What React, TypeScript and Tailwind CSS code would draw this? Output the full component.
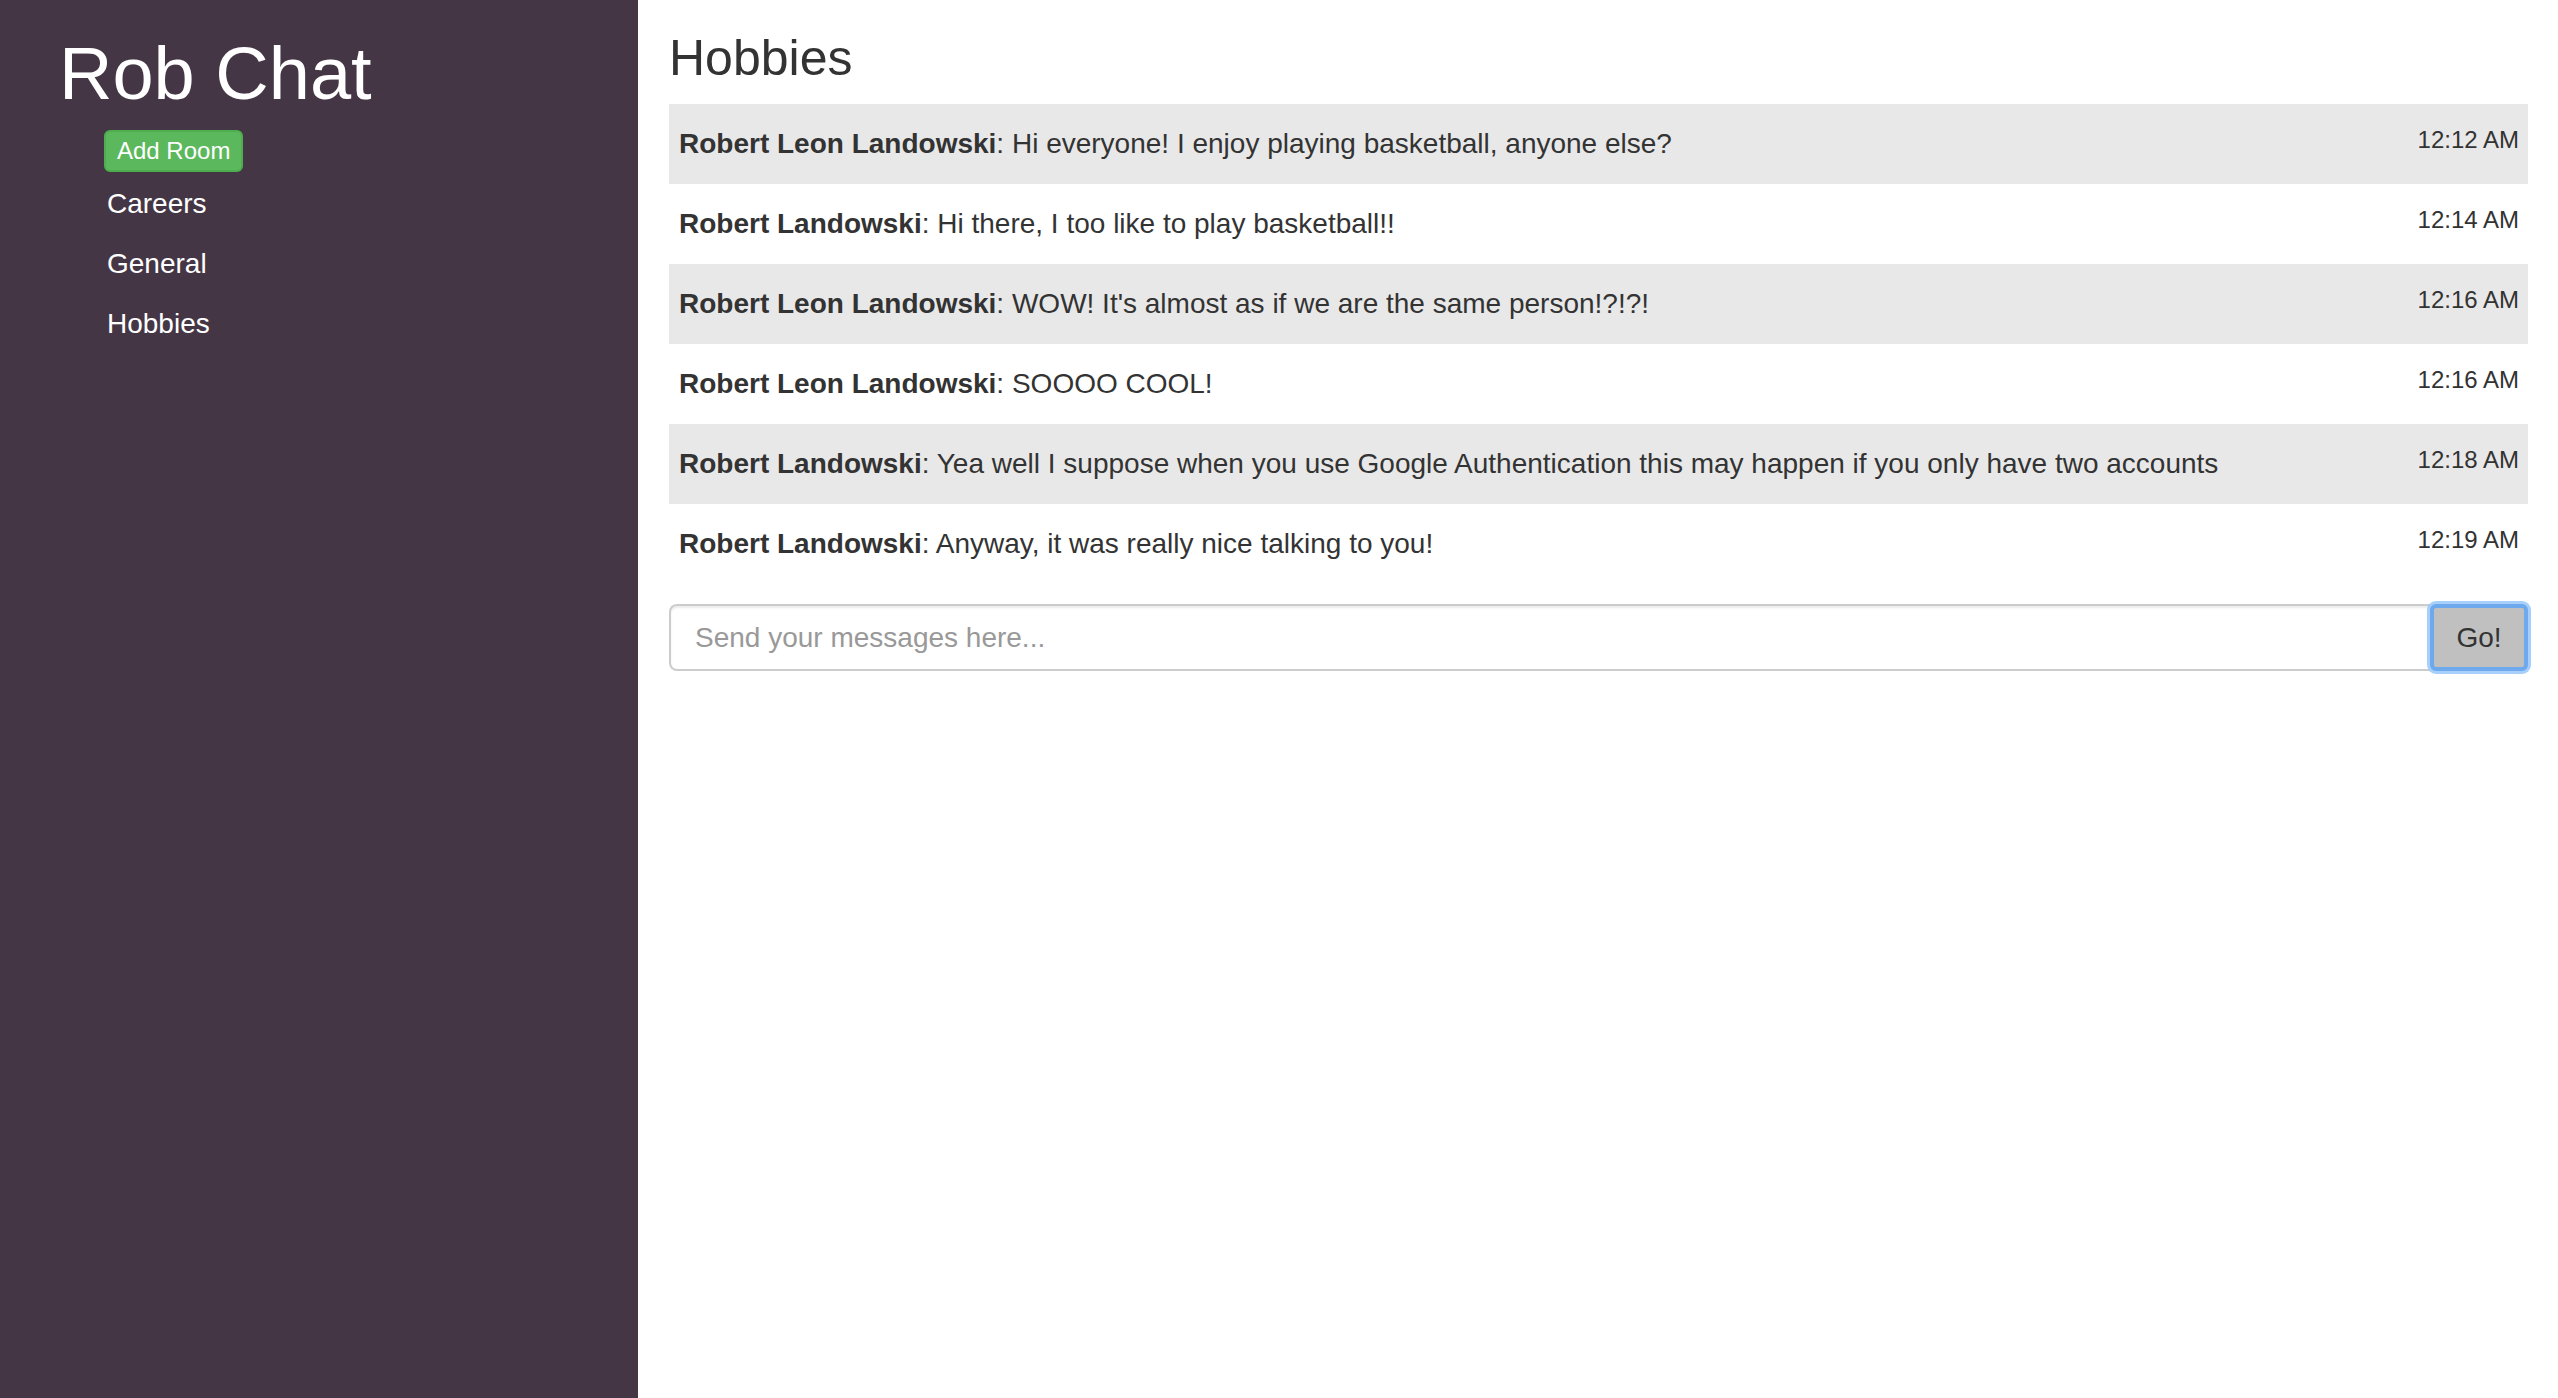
import type React from "react"

interface Message {
  user: string
  text: string
  time: string
}

const rooms = ["Careers", "General", "Hobbies"]

const messages: Message[] = [
  { user: "Robert Leon Landowski", text: "Hi everyone! I enjoy playing basketball, anyone else?", time: "12:12 AM" },
  { user: "Robert Landowski", text: "Hi there, I too like to play basketball!!", time: "12:14 AM" },
  { user: "Robert Leon Landowski", text: "WOW! It's almost as if we are the same person!?!?!", time: "12:16 AM" },
  { user: "Robert Leon Landowski", text: "SOOOO COOL!", time: "12:16 AM" },
  {
    user: "Robert Landowski",
    text: "Yea well I suppose when you use Google Authentication this may happen if you only have two accounts",
    time: "12:18 AM",
  },
  { user: "Robert Landowski", text: "Anyway, it was really nice talking to you!", time: "12:19 AM" },
]

const App: React.FC = () => {
  return (
    <div className="flex min-h-screen font-['Liberation_Sans',Arial,sans-serif] text-[#333]">
      {/* sidebar */}
      <aside className="w-[638px] shrink-0 bg-[#453646] pl-[59px] pt-[34px]">
        <h1 className="text-[74px] leading-[80px] text-white">Rob Chat</h1>
        <div className="mt-[16px] pl-[45px]">
          <button className="h-[42px] rounded-[6px] border-2 border-[#4cae4c] bg-[#5cb85c] px-[11px] text-[24px] leading-[38px] text-white">
            Add Room
          </button>
          <ul className="mt-[2px]">
            {rooms.map((room) => (
              <li key={room} className="h-[60px] pl-[3px] text-[28px] leading-[60px] text-white">
                {room}
              </li>
            ))}
          </ul>
        </div>
      </aside>

      {/* chat */}
      <main className="flex-1 pl-[31px] pr-[30px] pt-[31px]">
        <h2 className="text-[50px] leading-[55px]">Hobbies</h2>
        <div className="mt-[18px]">
          {messages.map((m, i) => (
            <div
              key={i}
              className={`flex h-[80px] justify-between pl-[10px] pr-[9px] ${i % 2 === 0 ? "bg-[#e8e8e8]" : "bg-white"}`}
            >
              <p className="text-[28px] leading-[80px]">
                <span className="font-bold">{m.user}</span>: {m.text}
              </p>
              <span className="pt-[24px] text-[24px] leading-[24px]">{m.time}</span>
            </div>
          ))}
        </div>
        <div className="mt-[20px] flex h-[67px]">
          <input
            className="h-full flex-1 rounded-l-[8px] border-2 border-r-0 border-[#ccc] pl-[24px] text-[28px] shadow-[inset_0_2px_2px_rgba(0,0,0,0.075)] outline-none placeholder:text-[#999]"
            placeholder="Send your messages here..."
          />
          <button className="h-full w-[98px] rounded-[6px] border-4 border-[#6ea9ee] bg-[#c0c0c0] text-[28px] text-[#333] shadow-[0_0_0_3px_rgba(150,200,250,0.85)]">
            Go!
          </button>
        </div>
      </main>
    </div>
  )
}

export default App
